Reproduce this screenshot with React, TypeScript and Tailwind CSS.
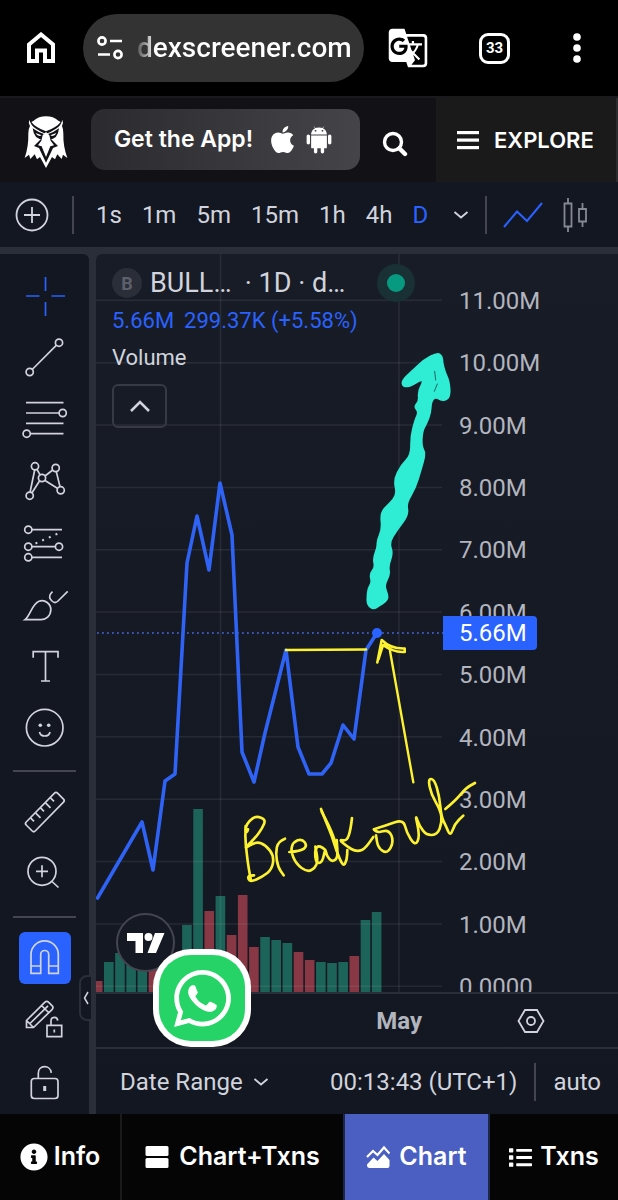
import type { ReactNode } from 'react'
import { FaApple, FaInfoCircle, FaList, FaWhatsapp } from 'react-icons/fa'
import { IoLogoAndroid } from 'react-icons/io'
import { MdGTranslate } from 'react-icons/md'

const timeframes = ['1s', '1m', '5m', '15m', '1h', '4h', 'D']

const prices = [
  '11.00M', '10.00M', '9.00M', '8.00M', '7.00M', '6.00M',
  '5.00M', '4.00M', '3.00M', '2.00M', '1.00M', '0.0000',
]

// [height, is up day]
const volume: [number, boolean][] = [
  [11, false], [30, true], [39, true], [40, true], [30, true], [26, false], [30, true], [28, true],
  [67, true], [183, true], [81, false], [96, true], [57, false], [97, false], [45, false],
  [55, true], [52, true], [49, true], [40, false], [32, false], [30, true], [29, true],
  [30, true], [36, false], [72, true], [80, true],
]

const pricePoints =
  '1.5,644 46,568 57,616 69,527 79,520 91,309 101,262 113,316 124,229 136,281 146,498 158,528 169,479 190,396 202,493 213,520 226,520 235,509 247,471 258,485 270,396 281,379'

// Freehand strokes, flat lists of x, y
const handwriting = [
  [47, 618, 45, 650, 50, 700, 56, 745, 63, 782],
  [54, 628, 50, 642, 46, 622, 58, 602, 78, 588, 108, 598, 96, 626, 76, 654, 38, 690, 78, 664, 108, 676, 132, 708, 126, 748, 98, 770, 60, 787, 52, 768, 72, 766],
  [165, 656, 144, 664, 137, 700, 144, 742, 161, 766],
  [178, 696, 212, 694, 232, 678, 216, 656, 190, 666, 182, 692, 198, 732, 232, 756, 254, 746, 264, 722, 256, 680],
  [286, 690, 268, 674, 254, 690, 258, 730, 277, 728, 286, 684, 290, 708, 306, 726, 324, 714, 320, 660],
  [273, 567, 290, 610, 306, 648, 318, 690, 340, 742, 351, 718, 352, 690],
  [275, 575, 300, 622, 318, 672],
  [366, 594, 362, 630, 350, 664, 326, 658, 352, 680, 376, 694, 402, 690, 430, 651],
  [432, 628, 440, 640, 476, 628, 492, 664, 472, 702, 444, 684, 438, 646],
  [432, 628, 470, 616, 520, 598, 530, 638, 555, 678, 570, 650, 555, 580, 568, 618, 590, 646, 622, 644, 636, 608, 632, 572, 604, 524, 594, 476, 613, 478, 628, 528, 634, 590, 648, 618, 661, 650, 674, 612, 700, 587],
  [646, 567, 676, 542, 708, 504, 735, 489],
]

const rallyArrow = [
  70, 838, 53, 824, 52, 800, 56, 772, 66, 758, 60, 732, 76, 712, 70, 686, 83, 652, 82, 632, 97, 598,
  92, 548, 118, 522, 142, 494, 132, 450, 154, 406, 184, 376, 183, 320, 196, 270, 207, 246, 193, 230,
  208, 214, 205, 185, 220, 156, 214, 148, 182, 168, 160, 170, 156, 152, 186, 124, 222, 90, 262, 69,
  276, 78, 277, 98, 284, 126, 297, 154, 300, 200, 280, 213, 256, 200, 243, 214, 241, 250, 229, 280,
  216, 304, 214, 350, 226, 370, 212, 420, 195, 476, 168, 520, 175, 554, 140, 600, 117, 638, 128, 670,
  114, 708, 119, 735, 101, 766, 115, 800, 106, 816, 88, 826,
]

// Quadratic curve through the midpoints of a point list
function smooth(p: number[], closed = false) {
  const pts: [number, number][] = []
  for (let i = 0; i < p.length; i += 2) pts.push([p[i], p[i + 1]])
  const mid = (a: [number, number], b: [number, number]) => `${(a[0] + b[0]) / 2} ${(a[1] + b[1]) / 2}`
  if (closed) {
    let d = `M${mid(pts[pts.length - 1], pts[0])}`
    pts.forEach((pt, i) => {
      d += `Q${pt[0]} ${pt[1]} ${mid(pt, pts[(i + 1) % pts.length])}`
    })
    return d + 'z'
  }
  let d = `M${pts[0][0]} ${pts[0][1]}`
  for (let i = 1; i < pts.length - 1; i++) {
    d += `Q${pts[i][0]} ${pts[i][1]} ${mid(pts[i], pts[i + 1])}`
  }
  const last = pts[pts.length - 1]
  return `${d}L${last[0]} ${last[1]}`
}

function Tool({ label, active, children }: { label: string; active?: boolean; children: ReactNode }) {
  return (
    <button
      type="button"
      aria-label={label}
      className={`flex h-[62px] w-full items-center justify-center ${active ? 'text-[#2962ff]' : 'text-[#d1d4dc]'}`}
    >
      <svg width="60" height="60" viewBox="0 0 60 60" fill="none" stroke="currentColor" strokeWidth="1.7">
        {children}
      </svg>
    </button>
  )
}

function Chevron() {
  return (
    <svg width="16" height="10" viewBox="0 0 16 10" fill="none" stroke="currentColor" strokeWidth="1.8">
      <path d="M1.500 2l6.500 5.500L14.500 2" />
    </svg>
  )
}

function BrowserBar() {
  return (
    <header className="flex h-24 items-center bg-black pl-[27px] pr-[34px] text-white">
      <button type="button" aria-label="Home">
        <svg width="28" height="32" viewBox="0 0 28 32" fill="none" stroke="currentColor" strokeWidth="4">
          <path d="M2 12.500L14 2.500l12 10V29h-8V18.500h-8V29H2z" />
        </svg>
      </button>
      <div className="ml-7 flex h-[68px] min-w-0 flex-1 items-center rounded-full bg-[#333333] pl-[14px]">
        <svg width="27" height="24" viewBox="0 0 27 24" fill="none" stroke="currentColor" strokeWidth="2.600" className="shrink-0">
          <circle cx="5" cy="5" r="3.600" />
          <path d="M13 5h12M1 18.500h12" />
          <circle cx="21" cy="18.500" r="3.600" />
        </svg>
        <input
          aria-label="Address"
          readOnly
          value="dexscreener.com"
          className="ml-[13px] w-full min-w-0 bg-linear-to-r from-[#555555] from-0% to-white to-8% bg-clip-text font-['Roboto',sans-serif] text-[28px] font-medium text-transparent outline-none"
        />
      </div>
      <button type="button" aria-label="Translate" className="ml-[23px]">
        <MdGTranslate size={42} />
      </button>
      <button
        type="button"
        aria-label="Tabs"
        className="ml-[50px] flex h-[31px] w-[31px] items-center justify-center rounded-[9px] border-3 border-white font-['Roboto',sans-serif] text-[15px] font-bold"
      >
        33
      </button>
      <button type="button" aria-label="More" className="ml-[60px]">
        <svg width="14" height="30" viewBox="0 0 14 30" fill="currentColor">
          <circle cx="7" cy="4" r="3.800" />
          <circle cx="7" cy="15" r="3.800" />
          <circle cx="7" cy="26" r="3.800" />
        </svg>
      </button>
    </header>
  )
}

function OwlLogo() {
  return (
    <svg width="44" height="52" viewBox="74 80 132 156" fill="currentColor">
      <path d="M103 94Q118 81 140 81t37 13l7 4Q172 114 140 126 108 114 96 98z" />
      <path d="M90 91Q94 108 110 118T140 134Q154 128 170 118T189 91Q193 100 188 110 192 118 192 132 191 172 204 206L191 196 187 209 174 195 167 210 158 203 140 236 122 203 113 210 106 195 93 209 89 196 76 206Q88 172 87 132 87 118 92 110 86 100 90 91z" />
      <g fill="#121116">
        <path d="M100 117Q118 130 134 134L130 150Q104 150 100 117z" />
        <path d="M179 117Q162 130 146 134L150 150Q176 150 179 117z" />
        <path d="M128 146L104 170 119 176 140 220 161 176 176 170 152 146z" />
      </g>
      <path d="M140 128L150 138 154 154 164 168 153 171 140 203 127 171 116 168 126 154 130 138z" />
      <path d="M109 131L127 138Q115 144 109 131zM171 131L153 138Q165 144 171 131z" />
    </svg>
  )
}

function SiteHeader() {
  return (
    <div className="flex h-[86px] items-stretch border-t-2 border-[#1a1a1c] bg-[#121116] font-['Inter',sans-serif] font-semibold text-white">
      <a href="#home" aria-label="Home" className="flex w-[91px] items-center justify-center pt-1">
        <OwlLogo />
      </a>
      <button
        type="button"
        className="my-[11px] flex h-[61px] flex-1 items-center justify-center rounded-[14px] bg-linear-to-r from-[#2b2a2e] to-[#454449]"
      >
        <span className="text-[23px]">Get the App!</span>
        <FaApple size={31} className="ml-[14px] shrink-0" />
        <IoLogoAndroid size={36} className="ml-[3px] shrink-0" />
      </button>
      <button type="button" aria-label="Search" className="flex w-[76px] items-center justify-center pt-[7px] pr-[6px]">
        <svg width="26" height="26" viewBox="0 0 26 26" fill="none" stroke="currentColor">
          <circle cx="11" cy="11" r="8.500" strokeWidth="3.400" />
          <path d="M17.500 17.500l5.500 5.500" strokeWidth="4.400" strokeLinecap="round" />
        </svg>
      </button>
      <button type="button" className="flex w-[182px] items-center border-r-2 border-[#2c2c2e] bg-[#1a1a1a] pl-[21px]">
        <svg width="22" height="20" viewBox="0 0 22 20" fill="currentColor">
          <rect y="1" width="22" height="3.200" />
          <rect y="8.500" width="22" height="3.200" />
          <rect y="16" width="22" height="3.200" />
        </svg>
        <span className="ml-[15px] text-[22px]">EXPLORE</span>
      </button>
    </div>
  )
}

function ChartToolbar() {
  return (
    <div className="flex h-[65px] items-center bg-[#131722] pl-[15px] text-[24px] text-[#d1d4dc]">
      <button type="button" aria-label="Compare">
        <svg width="34" height="34" viewBox="0 0 34 34" fill="none" stroke="currentColor" strokeWidth="1.800">
          <circle cx="17" cy="17" r="15.500" />
          <path d="M17 9v16M9 17h16" />
        </svg>
      </button>
      <span className="ml-[23px] h-[38px] w-0.5 bg-[#434651]" />
      <div className="ml-[22px] flex gap-5">
        {timeframes.map((t) => (
          <button key={t} type="button" className={t === 'D' ? 'text-[#2962ff]' : ''}>
            {t}
          </button>
        ))}
      </div>
      <button type="button" aria-label="More intervals" className="ml-[25px]">
        <Chevron />
      </button>
      <span className="ml-[16px] h-[38px] w-0.5 bg-[#434651]" />
      <button type="button" aria-label="Line chart" className="ml-[16px] text-[#2962ff]">
        <svg width="40" height="28" viewBox="0 0 40 28" fill="none" stroke="currentColor" strokeWidth="2">
          <path d="M1 26L14 10.500l10 9.500L39 2" />
        </svg>
      </button>
      <button type="button" aria-label="Candles" className="ml-[20px] text-[#868993]">
        <svg width="25" height="36" viewBox="0 0 25 36" fill="none" stroke="currentColor" strokeWidth="1.800">
          <path d="M1.500 6.500h7v23h-7zM5 1v5.500M5 29.500V35M16 12h7v12.500h-7zM19.500 6v6M19.500 24.500V30" />
        </svg>
      </button>
    </div>
  )
}

function DrawingTools() {
  return (
    <aside className="relative w-[89px] shrink-0 rounded-tr-md bg-[#131722] pt-[10px]">
      <Tool label="Cross" active>
        <path d="M30.500 12v14M30.500 37v14M11 31h13.500M36.500 31H50" />
      </Tool>
      <Tool label="Trend line">
        <circle cx="44" cy="15.700" r="3.600" />
        <circle cx="14.700" cy="45" r="3.600" />
        <path d="M41.500 18.200L17.200 42.500" />
      </Tool>
      <Tool label="Fib retracement">
        <path d="M11 13.700h37.500M11 24h33M11 34.300h37.500M15.300 44.700h33.200" />
        <circle cx="47.700" cy="24" r="3.600" />
        <circle cx="11.700" cy="44.700" r="3.600" />
      </Tool>
      <Tool label="Pattern">
        <path d="M19.700 19l-4.600 22M22 18.300l3 5.500M24.500 30L17 41.800M30 25l7.700-6M30 29.500l12.700 8M41.300 20.600l3.700 15" />
        <circle cx="20" cy="15.300" r="3.600" />
        <circle cx="40.700" cy="17" r="3.600" />
        <circle cx="27" cy="27" r="3.600" />
        <circle cx="14.700" cy="44.700" r="3.600" />
        <circle cx="45.700" cy="39.300" r="3.600" />
      </Tool>
      <Tool label="Forecast">
        <circle cx="13.300" cy="16.700" r="3.600" />
        <circle cx="13.300" cy="33.700" r="3.600" />
        <circle cx="44" cy="33.700" r="3.600" />
        <circle cx="13.300" cy="44.300" r="3.600" />
        <path d="M17 16.700h30M17 33.700h23.400M17 44.300h30" />
        <path d="M20.500 30.500L44 20" strokeWidth="2" strokeDasharray="2 5.300" />
      </Tool>
      <Tool label="Brush">
        <path d="M10 44.700C15 41 17 29 24 26.300c6-2.300 12 2.700 11.800 8.700-.2 6-4.800 9.700-10 9.700zM52.700 16.300L43 26c-2 2-4 2-6 0l-1.500-1.800c-2-2.700-.5-5.200 2-7.500" />
      </Tool>
      <Tool label="Text">
        <path d="M18.200 20.700v-6h24.800v6M30.500 14.700V44M26 44h9" />
      </Tool>
      <Tool label="Icons">
        <circle cx="29.700" cy="28.700" r="18.300" />
        <path d="M24.500 33c1 5.300 9.500 5.300 10.500 0" />
        <circle cx="25.300" cy="26.300" r="1.800" fill="currentColor" stroke="none" />
        <circle cx="33.700" cy="26.300" r="1.800" fill="currentColor" stroke="none" />
      </Tool>
      <hr className="mx-[13px] my-[10px] h-0.5 border-0 bg-[#434651]" />
      <Tool label="Measure">
        <path d="M39.500 10.200q1.500-1.500 3 0l6 6q1.500 1.500 0 3L20.200 48q-1.500 1.500-3 0l-6-6q-1.500-1.500 0-3z" />
        <path d="M15.500 34.800l3.500 3.500M20.500 29.800l5 5M25.500 24.800l3.500 3.500M30.500 19.800l5 5M35.500 14.800l3.500 3.500" />
      </Tool>
      <Tool label="Zoom in">
        <circle cx="27" cy="26.300" r="14" />
        <path d="M27 20.300v12M21 26.300h12M37 36.500l6.500 6" />
      </Tool>
      <hr className="mx-[13px] my-[10px] h-0.5 border-0 bg-[#434651]" />
      <Tool label="Magnet">
        <rect x="4" y="3" width="52" height="52" rx="6" fill="#2962ff" stroke="none" />
        <path d="M16 44.300V25.500a13.600 13.600 0 0127.300 0v18.800h-9.600V25.500a4 4 0 00-8 0v18.800zM16 37h9.700M33.700 37h9.600" />
      </Tool>
      <Tool label="Lock drawing mode">
        <path d="M11.500 36.500v-7L29.700 11.300q2-2 4 0l3.300 3.300q2 2 0 4L18.500 36.500zM11.500 29.500l7 7M14.500 33L33 14.800M26.500 14.500l7 7" />
        <path d="M32 34.300h14.700v11.400H32zM36 34.300V30c0-4.700 6.300-4.700 6.700-.3M39.300 38.500v3" />
      </Tool>
      <Tool label="Lock all drawings">
        <rect x="16.300" y="25.500" width="26.700" height="20" rx="3" />
        <path d="M23.300 25.300v-5c0-8.500 12-9 13-.5" />
        <path d="M29.700 33v5" strokeWidth="3" />
      </Tool>
      <button
        type="button"
        aria-label="Hide toolbar"
        className="absolute bottom-[93px] -right-1 flex h-[46px] w-[14px] items-center justify-center rounded-l-lg border-2 border-[#2a2e39] bg-[#131722] text-[#d1d4dc]"
      >
        <svg width="6" height="14" viewBox="0 0 6 14" fill="none" stroke="currentColor" strokeWidth="1.500" className="shrink-0">
          <path d="M5 1L1.500 7 5 13" />
        </svg>
      </button>
    </aside>
  )
}

function Plot() {
  return (
    <svg viewBox="0 0 522 738" preserveAspectRatio="xMinYMin meet" fill="none" className="absolute inset-0 h-full w-full">
      {volume.map(([h, up], i) => (
        <rect
          key={i}
          x={i === 0 ? 0 : 8 + (i - 1) * 11.16}
          y={738 - h}
          width={i === 0 ? 6.500 : 9.600}
          height={h}
          fill={up ? '#1c6459' : '#883844'}
        />
      ))}
      <g stroke="#b2b5be" strokeOpacity="0.110" strokeWidth="1.500">
        {prices.map((p, i) => (
          <path key={p} d={`M0 ${46.300 + i * 62.360}h346`} />
        ))}
        <path d="M124.500 0v738M303 0v738" />
      </g>
      <path d="M1 379h346" stroke="#4668e8" strokeWidth="1.600" strokeDasharray="1.800 3.200" />
      <polyline points={pricePoints} stroke="#2f63f5" strokeWidth="3.600" strokeLinejoin="round" strokeLinecap="round" />
      <circle cx="281" cy="379" r="5" fill="#2962ff" />
    </svg>
  )
}

function Annotations() {
  return (
    <svg
      viewBox="0 0 522 738"
      preserveAspectRatio="xMinYMin meet"
      fill="none"
      strokeLinecap="round"
      strokeLinejoin="round"
      className="pointer-events-none absolute inset-0 h-full w-full"
    >
      <g transform="translate(254 76) scale(.3333)">
        <path d={smooth(rallyArrow, true)} fill="#2eedd4" stroke="#2eedd4" strokeWidth="6" />
        <path d="M254 124l3 26M262 162l-9 22" stroke="#181c27" strokeWidth="2" />
      </g>
      <g stroke="#fdf22f">
        <path d="M190 396l80-.5" strokeWidth="2.600" />
        <path d="M294 397l23.300 131.300" strokeWidth="2.400" />
        <path d="M281.300 408.500l4.400-22.500c5 5 11 9 23 8.500v3.400c-8 .5-14-1-20.500-7" strokeWidth="2.600" />
        <path d="M282.500 405l4.500-14 7 4" strokeWidth="2.600" />
        <g transform="translate(134 366) scale(.3333)" strokeWidth="8">
          {handwriting.map((stroke, i) => (
            <path key={i} d={smooth(stroke)} />
          ))}
        </g>
      </g>
    </svg>
  )
}

function Legend() {
  return (
    <div className="absolute top-[10px] left-4 text-[22px] text-[#d1d4dc]">
      <div className="flex h-[38px] items-center">
        <span className="flex h-[30px] w-[30px] items-center justify-center rounded-full bg-[#2a2e39] text-[18px] font-bold text-[#5d606b]">
          B
        </span>
        <h1 className="ml-2 whitespace-pre text-[27px]">BULL…  · 1D · d…</h1>
        <span className="ml-8 flex h-[38px] w-[38px] items-center justify-center rounded-full bg-[#193135]">
          <span className="h-[18px] w-[18px] rounded-full bg-[#089981]" />
        </span>
      </div>
      <p className="flex h-[36px] items-center gap-[10px] text-[#2962ff]">
        <span>5.66M</span>
        <span>299.37K (+5.58%)</span>
      </p>
      <p className="flex h-[38px] items-center">Volume</p>
      <button
        type="button"
        aria-label="Collapse legend"
        className="mt-[8px] flex h-[44px] w-[55px] items-center justify-center rounded-md border-2 border-[#363a45]"
      >
        <svg width="22" height="14" viewBox="0 0 22 14" fill="none" stroke="currentColor" strokeWidth="2.600">
          <path d="M2 12l9-9 9 9" />
        </svg>
      </button>
    </div>
  )
}

function PriceAxis() {
  return (
    <div className="relative w-[175px] overflow-hidden text-[#b2b5be]">
      <ul className="mt-[33px] flex h-[714px] flex-col justify-between pl-4 leading-7">
        {prices.map((p) => (
          <li key={p}>{p}</li>
        ))}
      </ul>
      <span className="absolute top-[362px] left-0 flex h-[34px] w-[94px] items-center rounded-r-sm bg-[#2962ff] pl-4 text-white">
        5.66M
      </span>
    </div>
  )
}

function ChartPanel() {
  return (
    <main className="relative flex min-w-0 flex-1 flex-col rounded-tl-md bg-linear-to-b from-[#181c27] to-[#131722] text-[24px]">
      <div className="relative flex h-[738px]">
        <Plot />
        <div className="flex-1" />
        <PriceAxis />
        <Legend />
        <Annotations />
        <a
          href="#tradingview"
          aria-label="TradingView"
          className="absolute bottom-[20px] left-[20px] flex h-[59px] w-[59px] items-center justify-center rounded-full border-2 border-[#434651] bg-[#151924] text-white"
        >
          <svg width="38" height="20" viewBox="0 0 38 20" fill="currentColor">
            <path d="M0 0h16v20H8.500V8H0zM28 0h9.500L29 20h-8.500z" />
            <circle cx="21.500" cy="4" r="4" />
          </svg>
        </a>
      </div>
      <div className="flex h-[57px] items-center border-y-2 border-[#2a2e39] text-[#b2b5be]">
        <div className="flex-1 pr-[21px] text-right font-bold">May</div>
        <button type="button" aria-label="Axis settings" className="flex w-[175px] justify-center text-[#d1d4dc]">
          <svg width="28" height="26" viewBox="0 0 28 26" fill="none" stroke="currentColor" strokeWidth="1.800">
            <path d="M8 2h12l6.500 11L20 24H8L1.500 13z" />
            <circle cx="14" cy="13" r="4" />
          </svg>
        </button>
      </div>
      <div className="flex h-[65px] items-center pr-[17px] pl-6 text-[#d1d4dc]">
        <button type="button" className="flex items-center gap-[10px]">
          Date Range
          <Chevron />
        </button>
        <button type="button" className="ml-auto">
          00:13:43 (UTC+1)
        </button>
        <span className="ml-[17px] h-[38px] w-0.5 bg-[#434651]" />
        <button type="button" className="ml-[17px]">
          auto
        </button>
      </div>
      <button
        type="button"
        aria-label="WhatsApp"
        className="absolute bottom-[67px] left-[57px] flex h-[98px] w-[98px] items-center justify-center rounded-[38px] bg-white text-white"
      >
        <span className="flex h-[86px] w-[86px] items-center justify-center rounded-[32px] bg-[#25d366]">
          <FaWhatsapp size={65} />
        </span>
      </button>
    </main>
  )
}

function BottomNav() {
  const tab = 'flex items-center justify-center'
  return (
    <nav className="grid h-[86px] grid-cols-[122fr_221fr_147fr_128fr] bg-[#050505] font-['Inter',sans-serif] text-[25px] font-semibold text-white">
      <button type="button" className={`${tab} gap-[6px] border-r-2 border-[#1a1a1c]`}>
        <FaInfoCircle size={28} />
        Info
      </button>
      <button type="button" className={`${tab} gap-[10px]`}>
        <svg width="24" height="24" viewBox="0 0 24 24" fill="currentColor">
          <rect x=".5" y="1" width="23" height="10" rx="1.500" />
          <rect x=".5" y="13" width="23" height="10" rx="1.500" />
        </svg>
        Chart+Txns
      </button>
      <button type="button" aria-current="page" className={`${tab} gap-[9px] border-x-2 border-[#1f2747] bg-[#4a5fc1]`}>
        <svg width="24" height="24" viewBox="0 0 24 24" fill="none" stroke="currentColor">
          <path d="M1 12l6-6 4.500 4L18 2.500l5.500 6" strokeWidth="2.200" />
          <path d="M1 19.500l6.500-7 4 3.500 6.500-7 5.500 6V21q0 2-2 2h-18q-2 0-2.500-2z" fill="currentColor" stroke="none" />
        </svg>
        Chart
      </button>
      <button type="button" className={`${tab} gap-[8px]`}>
        <FaList size={23} />
        Txns
      </button>
    </nav>
  )
}

export default function App() {
  return (
    <div className="bg-[#2a2e39] font-['Roboto',sans-serif]">
      <BrowserBar />
      <SiteHeader />
      <ChartToolbar />
      <div className="flex gap-[7px] pt-[7px]">
        <DrawingTools />
        <ChartPanel />
      </div>
      <BottomNav />
    </div>
  )
}
